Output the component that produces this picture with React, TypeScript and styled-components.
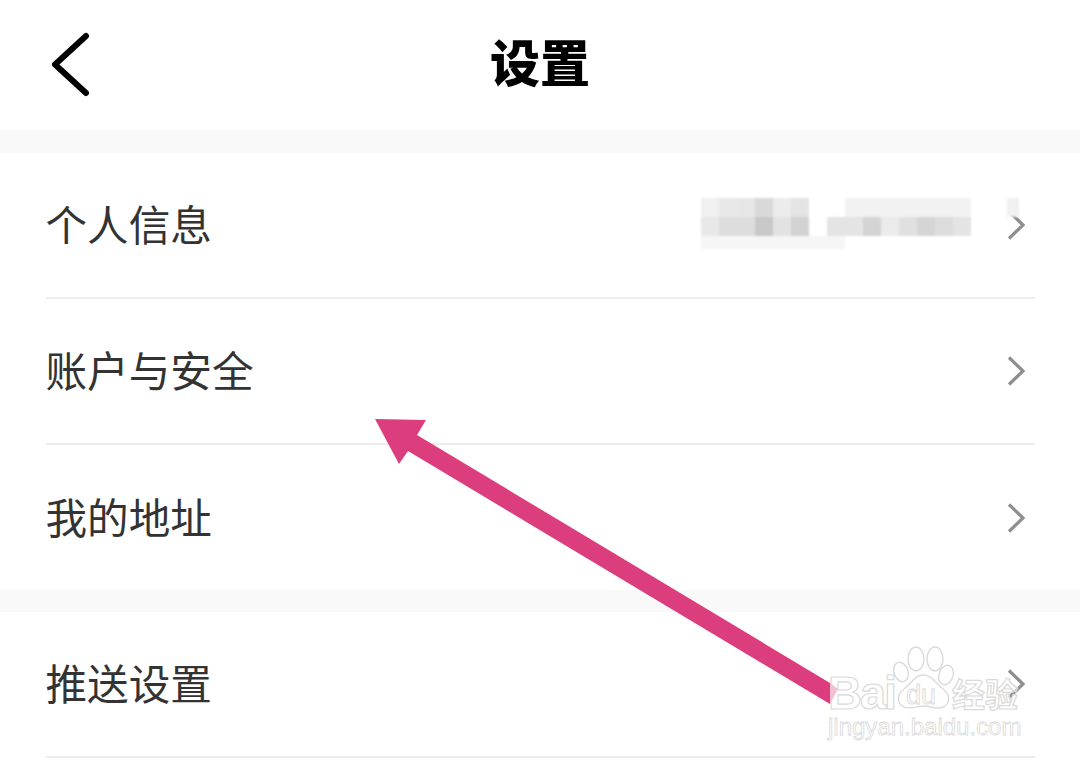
import React from "react";
import styled, { createGlobalStyle } from "styled-components";

const GlobalStyle = createGlobalStyle`
  html, body {
    margin: 0;
    padding: 0;
    background: #fff;
  }
  body {
    font-family: "Noto Sans CJK SC", "Noto Sans", sans-serif;
  }
`;

const Page = styled.div`
  position: relative;
  width: 1080px;
  height: 764px;
  overflow: hidden;
  background: #fff;
`;

const Header = styled.header`
  display: grid;
  grid-template-columns: 1fr auto 1fr;
  align-items: center;
  height: 130px;
  padding-left: 50px;
`;

const BackIcon = styled.svg`
  display: block;
  width: 42px;
  height: 66px;
`;

const Title = styled.h1`
  margin: 0 0 0 -50px;
  padding-bottom: 10px;
  font-size: 50px;
  font-weight: 900;
  line-height: 1;
  color: #000;
`;

const Gap = styled.div`
  height: ${(p: { $h: number }) => p.$h}px;
  background: #f9f9f9;
`;

const Row = styled.div<{ $last?: boolean }>`
  display: flex;
  align-items: center;
  box-sizing: border-box;
  height: ${(p) => (p.$last ? 145 : 146)}px;
  margin: 0 45px 0 46px;
  border-bottom: ${(p) => (p.$last ? "none" : "2px solid #ececec")};
`;

const Label = styled.span`
  flex: 1;
  margin-left: -0.5px;
  padding-bottom: 2px;
  font-size: 41.6px;
  line-height: 1;
  color: #333;
`;

const Mosaic = styled.svg`
  display: block;
  width: 318px;
  height: 54px;
  margin-right: -13px;
  filter: blur(1px);
`;

const Chevron = styled.svg`
  display: block;
  flex: none;
  width: 20px;
  height: 32px;
  margin-right: 9px;
`;

const ArrowLayer = styled.svg`
  position: absolute;
  left: 0;
  top: 0;
  width: 1080px;
  height: 764px;
  pointer-events: none;
`;

const Watermark = styled.div`
  position: absolute;
  left: 826px;
  top: 646px;
  width: 200px;
  height: 100px;
  pointer-events: none;
  color: rgba(255, 255, 255, 0.5);
  -webkit-text-stroke: 1.2px #dadada;
`;

const Brand = styled.span`
  position: absolute;
  left: 2px;
  top: 25px;
  font-family: "Liberation Sans", sans-serif;
  font-size: 47px;
  font-weight: 700;
  line-height: 44px;
  letter-spacing: -2px;
`;

const BrandCn = styled.span`
  position: absolute;
  left: 126px;
  top: 27px;
  font-size: 33px;
  font-weight: 700;
  line-height: 40px;
`;

const Domain = styled.span`
  position: absolute;
  left: 2px;
  top: 69px;
  font-family: "Liberation Sans", sans-serif;
  font-size: 24px;
  line-height: 24px;
  -webkit-text-stroke: 0.8px #dadada;
`;

const Paw = styled.svg`
  position: absolute;
  left: 64px;
  top: 0;
  width: 68px;
  height: 66px;
`;

const PawText = styled.span`
  position: absolute;
  left: 80px;
  top: 34px;
  font-family: "Liberation Sans", sans-serif;
  font-size: 27px;
  line-height: 30px;
  -webkit-text-stroke: 0.9px #dadada;
`;

const rows = [{ label: "推送设置" }];

const top = [
  { label: "个人信息", masked: true },
  { label: "账户与安全" },
  { label: "我的地址" },
];

// blurred-out account name: x, y, w, h, fill
const cells: [number, number, number, number, string][] = [
  [0, 0, 18, 19, "#f0f0f0"],
  [18, 0, 18, 19, "#e8e8e8"],
  [36, 0, 18, 19, "#e6e6e6"],
  [54, 0, 18, 19, "#d9d9d9"],
  [72, 0, 18, 19, "#ececec"],
  [90, 0, 18, 19, "#e4e4e4"],
  [144, 0, 126, 19, "#f2f2f2"],
  [306, 0, 12, 19, "#f0f0f0"],
  [0, 19, 18, 19, "#e8e8e8"],
  [18, 19, 36, 19, "#dddddd"],
  [54, 19, 18, 19, "#c9c9c9"],
  [72, 19, 18, 19, "#e2e2e2"],
  [90, 19, 18, 19, "#d2d2d2"],
  [126, 19, 36, 19, "#e4e4e4"],
  [162, 19, 18, 19, "#d4d4d4"],
  [180, 19, 18, 19, "#ebebeb"],
  [198, 19, 18, 19, "#e0e0e0"],
  [216, 19, 18, 19, "#d5d5d5"],
  [234, 19, 18, 19, "#dcdcdc"],
  [252, 19, 18, 19, "#e4e4e4"],
  [0, 38, 144, 13, "#f6f6f6"],
];

const ChevronRight = () => (
  <Chevron viewBox="0 0 20 32">
    <path d="M3 2.5 L17 16 L3 29.5" fill="none" stroke="#8e8e8e" strokeWidth="3.2" />
  </Chevron>
);

const App: React.FC = () => (
  <Page>
    <GlobalStyle />
    <Header>
      <BackIcon viewBox="0 0 42 66">
        <path
          d="M36 4 L5 32.5 L36 61"
          fill="none"
          stroke="#000"
          strokeWidth="6"
          strokeLinecap="round"
          strokeLinejoin="round"
        />
      </BackIcon>
      <Title>设置</Title>
      <span />
    </Header>
    <Gap $h={23} />
    {top.map((item, i) => (
      <Row key={item.label} $last={i === top.length - 1}>
        <Label>{item.label}</Label>
        {item.masked && (
          <Mosaic viewBox="0 0 318 54">
            {cells.map(([x, y, w, h, fill]) => (
              <rect key={`${x}-${y}`} x={x} y={y} width={w} height={h} fill={fill} />
            ))}
          </Mosaic>
        )}
        <ChevronRight />
      </Row>
    ))}
    <Gap $h={22} />
    {rows.map((item) => (
      <Row key={item.label}>
        <Label>{item.label}</Label>
        <ChevronRight />
      </Row>
    ))}

    <Watermark>
      <Brand>Bai</Brand>
      <Paw viewBox="0 0 68 66">
        <g fill="none" stroke="#dadada" strokeWidth="1.4">
          <ellipse cx="11" cy="26" rx="7" ry="10" transform="rotate(-20 11 26)" />
          <ellipse cx="26" cy="13" rx="8" ry="12" />
          <ellipse cx="45" cy="13" rx="8" ry="12" />
          <ellipse cx="56" cy="29" rx="7" ry="10" transform="rotate(20 56 29)" />
          <path d="M33 29 C25 29 22 37 14 43 C5 50 7 62 20 62 C26 62 29 60 34 60 C39 60 42 62 47 62 C60 62 62 50 53 43 C45 37 42 29 33 29 Z" />
        </g>
      </Paw>
      <PawText>du</PawText>
      <BrandCn>经验</BrandCn>
      <Domain>jingyan.baidu.com</Domain>
    </Watermark>

    <ArrowLayer viewBox="0 0 1080 764">
      <polygon points="830,683 838,689 830,704" fill="#f3bdd2" />
      <polygon
        points="375,419 426,420 417,435 830,683 830,704 408,451 399,464"
        fill="#dc3d7c"
      />
    </ArrowLayer>
  </Page>
);

export default App;
